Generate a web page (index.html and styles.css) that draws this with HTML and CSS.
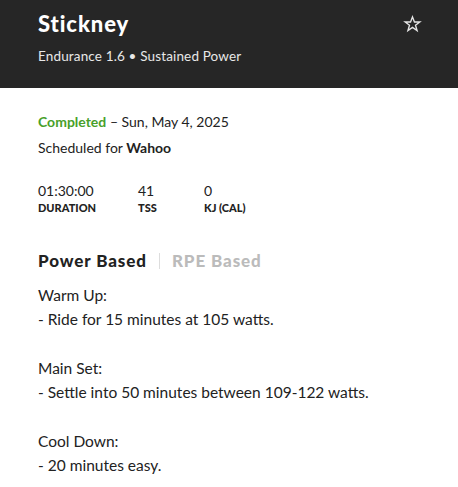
FILE: index.html
```html
<!DOCTYPE html>
<html>
<head>
<meta charset="utf-8">
<link rel="stylesheet" href="styles.css">
</head>
<body>
<header class="hero">
  <div class="hero-text">
    <h1 class="title">Stickney</h1>
    <p class="subtitle">Endurance 1.6 • Sustained Power</p>
  </div>
  <svg class="star" width="19" height="18" viewBox="0 0 24 24" fill="none" stroke="#e6e6e6" stroke-width="1.8" stroke-linejoin="miter"><polygon points="12,2.5 14.6,9.3 21.8,9.3 16,13.7 18.1,20.8 12,16.5 5.9,20.8 8,13.7 2.2,9.3 9.4,9.3"/></svg>
</header>
<main class="content">
  <p class="status"><span class="done">Completed</span> – Sun, May 4, 2025</p>
  <p class="sched">Scheduled for <b>Wahoo</b></p>
  <div class="stats">
    <div class="stat"><span class="val">01:30:00</span><span class="lab">DURATION</span></div>
    <div class="stat"><span class="val">41</span><span class="lab">TSS</span></div>
    <div class="stat"><span class="val">0</span><span class="lab">KJ (CAL)</span></div>
  </div>
  <div class="tabs">
    <span class="tab active">Power Based</span>
    <span class="sep"></span>
    <span class="tab">RPE Based</span>
  </div>
  <div class="desc">
    <p>Warm Up:<br>- Ride for 15 minutes at 105 watts.</p>
    <p>Main Set:<br>- Settle into 50 minutes between 109-122 watts.</p>
    <p>Cool Down:<br>- 20 minutes easy.</p>
  </div>
</main>
</body>
</html>
```
FILE: styles.css
```css
* { box-sizing: border-box; }
body {
  margin: 0;
  font-family: Lato, "Open Sans", sans-serif;
  color: #222;
  background: #fff;
}
.hero {
  background: #262626;
  height: 88px;
  padding: 10px 36px 0 38px;
  display: flex;
  justify-content: space-between;
  align-items: flex-start;
}
.title {
  margin: 0;
  color: #fff;
  font-size: 22px;
  font-weight: 900;
  line-height: 28px;
  letter-spacing: 0.9px;
}
.subtitle {
  margin: 10px 0 0;
  color: #e8e8e8;
  font-size: 13.5px;
  line-height: 16px;
  letter-spacing: 0.15px;
}
.star { margin-top: 5px; }
.content { padding: 21px 38px 0; }
.status, .sched { margin: 0; font-size: 14px; line-height: 26px; }
.done { color: #48a02a; font-weight: 700; }
.sched b { font-weight: 700; }
.stats { display: flex; margin-top: 21px; }
.stat { display: flex; flex-direction: column; }
.stat:nth-child(1) { width: 100px; }
.stat:nth-child(2) { width: 66px; }
.val { font-size: 14px; line-height: 18px; }
.lab { font-size: 11px; font-weight: 900; line-height: 16px; }
.tabs { display: flex; align-items: center; margin-top: 33px; gap: 12px; }
.tab { font-size: 17px; font-weight: 900; color: #bbb; line-height: 24px; letter-spacing: 0.9px; }
.tab.active { color: #222; }
.sep { width: 1px; height: 16px; background: #ddd; }
.desc { margin-top: 10px; }
.desc p { margin: 0 0 25px; font-size: 15.5px; line-height: 24px; letter-spacing: 0px; }
```
